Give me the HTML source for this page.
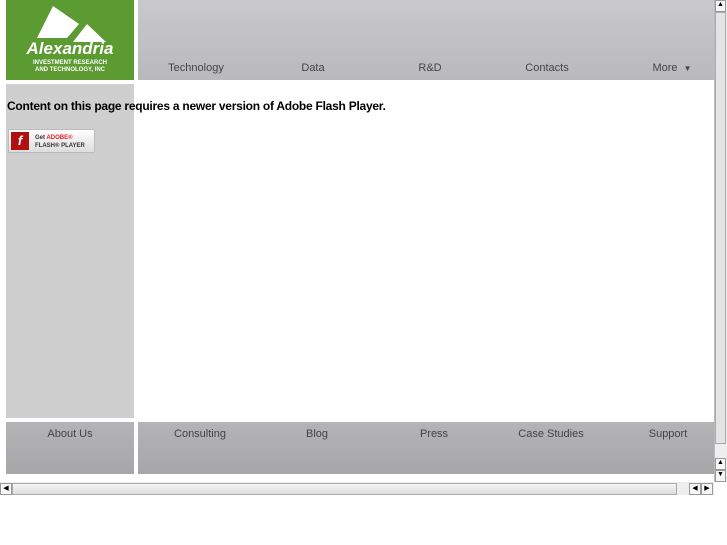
<!DOCTYPE html>
<html><head><style>
body{margin:0;width:727px;height:545px;background:#fff;position:relative;overflow:hidden;font-family:"Liberation Sans",sans-serif}
.a{position:absolute}
.nav{background:linear-gradient(#c9c9cb,#b9b9bb);}
.ft{background:linear-gradient(#b4b4b6,#a6a6a8);}
.t{position:absolute;font-size:11px;color:#444;transform:translateX(-50%);white-space:nowrap}
</style></head><body>
<div class="a" style="left:6px;top:0;width:128px;height:80px;background:#5c9a32">
<svg width="128" height="80" style="position:absolute;left:0;top:0">
<polygon points="47,6 73,24 61,38 31,38" fill="#fff"/>
<polygon points="81,24 100,42 67,42" fill="#fff"/>
</svg>
<div class="a" style="left:0;width:128px;top:39px;text-align:center;color:#fff;font-weight:bold;font-style:italic;font-size:17px">Alexandria</div>
<div class="a" style="left:0;width:128px;top:60px;text-align:center;color:#fff;font-weight:bold;font-size:6px;line-height:7px">INVESTMENT RESEARCH<br>AND TECHNOLOGY, INC</div>
</div>
<div class="a nav" style="left:138px;top:0;width:576px;height:80px"></div>
<div class="t" style="left:196px;top:62px">Technology</div>
<div class="t" style="left:313px;top:62px">Data</div>
<div class="t" style="left:430px;top:62px">R&amp;D</div>
<div class="t" style="left:547px;top:62px">Contacts</div>
<div class="t" style="left:672px;top:62px">More &nbsp;<span style="font-size:8px">▼</span></div>
<div class="a" style="left:6px;top:84px;width:128px;height:334px;background:#cfcfcf"></div>
<div class="a" style="left:7px;top:99px;font-size:12px;font-weight:bold;color:#000;letter-spacing:-0.25px">Content on this page requires a newer version of Adobe Flash Player.</div>
<div class="a" style="left:8px;top:129px;width:87px;height:24px;background:linear-gradient(#fff,#ddd);border:1px solid #bbb;box-sizing:border-box">
<div class="a" style="left:2px;top:2px;width:18px;height:18px;background:#b01010;color:#fff;font-size:13px;font-style:italic;font-weight:bold;text-align:center;line-height:18px">f</div>
<div class="a" style="left:26px;top:4px;font-size:6px;line-height:8px;color:#333;font-weight:bold">Get <span style="color:#d22">ADOBE®</span><br>FLASH® PLAYER</div>
</div>
<div class="a ft" style="left:6px;top:422px;width:128px;height:52px"></div>
<div class="a ft" style="left:138px;top:422px;width:576px;height:52px"></div>
<div class="t" style="left:70px;top:428px">About Us</div>
<div class="t" style="left:200px;top:428px">Consulting</div>
<div class="t" style="left:317px;top:428px">Blog</div>
<div class="t" style="left:434px;top:428px">Press</div>
<div class="t" style="left:551px;top:428px">Case Studies</div>
<div class="t" style="left:668px;top:428px">Support</div>
<div class="a" style="left:714px;top:0;width:13px;height:482px;background:#eee;border-left:1px solid #bbb;box-sizing:border-box"></div>
<div class="a" style="left:715px;top:12px;width:11px;height:432px;background:#e4e4e4;border:1px solid #aaa;box-sizing:border-box"></div>
<div class="a" style="left:715px;top:0;width:11px;height:12px;font-size:7px;text-align:center;border:1px solid #999;box-sizing:border-box;background:#f6f6f6">▲</div>
<div class="a" style="left:715px;top:458px;width:11px;height:12px;font-size:7px;text-align:center;border:1px solid #999;box-sizing:border-box;background:#f6f6f6">▲</div>
<div class="a" style="left:715px;top:470px;width:11px;height:12px;font-size:7px;text-align:center;border:1px solid #999;box-sizing:border-box;background:#f6f6f6">▼</div>
<div class="a" style="left:0;top:482px;width:714px;height:13px;background:#eee"></div>
<div class="a" style="left:0;top:483px;width:12px;height:12px;font-size:7px;text-align:center;border:1px solid #999;box-sizing:border-box;background:#f6f6f6">◀</div>
<div class="a" style="left:12px;top:483px;width:665px;height:12px;background:linear-gradient(#f4f4f4,#ddd);border:1px solid #aaa;box-sizing:border-box"></div>
<div class="a" style="left:689px;top:483px;width:12px;height:12px;font-size:7px;text-align:center;border:1px solid #999;box-sizing:border-box;background:#f6f6f6">◀</div>
<div class="a" style="left:701px;top:483px;width:12px;height:12px;font-size:7px;text-align:center;border:1px solid #999;box-sizing:border-box;background:#f6f6f6">▶</div>
</body></html>
